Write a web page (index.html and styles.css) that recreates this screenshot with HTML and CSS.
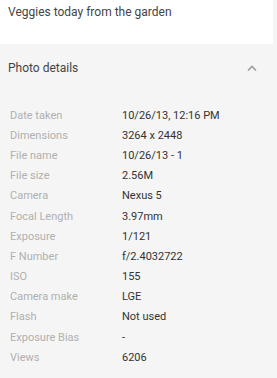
FILE: index.html
```html
<!DOCTYPE html>
<html lang="en">
<head>
    <meta charset="UTF-8">
    <meta name="viewport" content="width=device-width, initial-scale=1.0">
    <title>Photo details</title>
    <link rel="stylesheet" href="styles.css">
</head>
<body>
    <div class="caption">Veggies today from the garden</div>

    <div class="details-header">
        <span>Photo details</span>
        <svg class="chevron" width="10" height="6" viewBox="0 0 10 6">
            <path d="M1 5.5 L5 1.5 L9 5.5" fill="none" stroke="#9e9e9e" stroke-width="1.6"/>
        </svg>
    </div>

    <div class="details">
        <div class="row"><span class="label">Date taken</span><span class="value">10/26/13, 12:16 PM</span></div>
        <div class="row"><span class="label">Dimensions</span><span class="value">3264 x 2448</span></div>
        <div class="row"><span class="label">File name</span><span class="value">10/26/13 - 1</span></div>
        <div class="row"><span class="label">File size</span><span class="value">2.56M</span></div>
        <div class="row"><span class="label">Camera</span><span class="value">Nexus 5</span></div>
        <div class="row"><span class="label">Focal Length</span><span class="value">3.97mm</span></div>
        <div class="row"><span class="label">Exposure</span><span class="value">1/121</span></div>
        <div class="row"><span class="label">F Number</span><span class="value">f/2.4032722</span></div>
        <div class="row"><span class="label">ISO</span><span class="value">155</span></div>
        <div class="row"><span class="label">Camera make</span><span class="value">LGE</span></div>
        <div class="row"><span class="label">Flash</span><span class="value">Not used</span></div>
        <div class="row"><span class="label">Exposure Bias</span><span class="value">-</span></div>
        <div class="row"><span class="label">Views</span><span class="value">6206</span></div>
    </div>
</body>
</html>
```

FILE: styles.css
```css
body {
    margin: 0;
    background-color: #f5f5f5;
    font-family: Roboto, "Liberation Sans", sans-serif;
    color: #444;
}

.caption {
    width: 273px;
    height: 44px;
    box-sizing: border-box;
    padding: 3px 8px;
    background-color: #ffffff;
    font-size: 12px;
    line-height: 18px;
}

.details-header {
    display: flex;
    align-items: center;
    justify-content: space-between;
    height: 48px;
    padding: 0 20px 0 8px;
    font-size: 12px;
    color: #444;
}

.chevron {
    display: block;
}

.details {
    padding: 13px 10px 0 10px;
}

.row {
    display: flex;
    height: 20.2px;
    align-items: center;
    font-size: 11px;
}

.label {
    width: 112px;
    color: #b0b0b0;
}

.value {
    color: #333;
}
```
